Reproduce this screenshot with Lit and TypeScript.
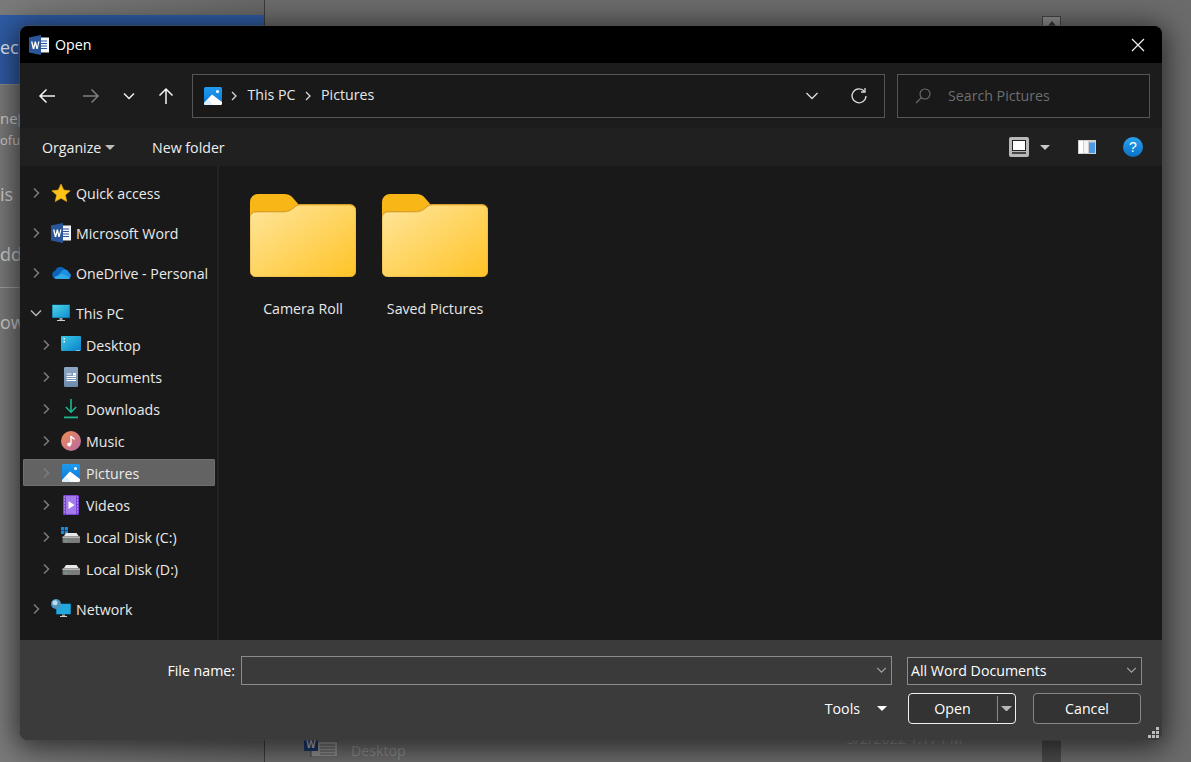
import { LitElement, html, css, svg } from "lit";
import { customElement } from "lit/decorators.js";

const word = (s: number) => html`<svg width=${s} height=${s} viewBox="0 0 20 20">
  <rect x="8" y="2.5" width="12" height="15" fill="#f4f6fa"/>
  <path d="M11 6h7M11 8.500h7M11 11h7M11 13.500h7" stroke="#2b579a" stroke-width="1"/>
  <path d="M0 2.500 12 0v20L0 17.500z" fill="#2b579a"/>
  <path d="M2 6.500h1.500l1 5 1.200-5h1.300l1.200 5 1-5h1.300L8.700 14H7.300L6.300 9.500 5.300 14H3.800z" fill="#fff"/>
</svg>`;

const picturesIcon = (s: number) => html`<svg width=${s} height=${s} viewBox="0 0 18 18">
  <defs><linearGradient id="picg" x1="0" y1="0" x2="0" y2="1"><stop offset="0" stop-color="#1f9bef"/><stop offset="1" stop-color="#0b76d6"/></linearGradient></defs>
  <rect width="18" height="18" rx="1.500" fill="url(#picg)"/>
  <circle cx="13.500" cy="4.500" r="1.500" fill="#fff"/>
  <path d="M0 16 8 7.500 18 15v1.500a1.500 1.500 0 0 1-1.500 1.500h-15A1.500 1.500 0 0 1 0 16.500z" fill="#fff"/>
  <path d="M0 17 4.500 12.800 9 18H1.500z" fill="#d9efff"/>
</svg>`;

const disk = (win: boolean) => html`<svg width="20" height="20" viewBox="0 0 20 20">
  ${win ? svg`<path d="M0 0h3.200v3.200H0zM3.800 0H7v3.200H3.800zM0 3.800h3.200V7H0zM3.800 3.800H7V7H3.800z" fill="#1b86d8"/>` : ""}
  <path d="M3 9 5 6h10.500l2.500 3.500H2z" fill="#e8e8e8"/>
  <rect x="1.500" y="9.500" width="17.500" height="6.500" rx="1" fill="#7c7c7c"/>
  <rect x="1.500" y="9.500" width="17.500" height="1.500" fill="#b5b5b5"/>
  <rect x="4" y="13" width="1.500" height="1.500" fill="#3fd45c"/>
</svg>`;

const icons: Record<string, unknown> = {
  star: html`<svg width="20" height="20" viewBox="0 0 20 20"><path d="M10 1l2.800 6 6.400.700-4.800 4.400 1.400 6.500L10 15.300l-5.800 3.300 1.400-6.500L.8 7.700 7.200 7z" fill="#fcc419" stroke="#e9a90c" stroke-width=".6"/></svg>`,
  word: word(20),
  cloud: html`<svg width="20" height="20" viewBox="0 0 20 20"><path d="M5 15.500A3.900 3.900 0 0 1 4.300 7.800 5.500 5.500 0 0 1 14.500 7a3.800 3.800 0 0 1 .4 1l-5 4z" fill="#0c64b8"/><path d="M4.500 16h12a3.300 3.300 0 0 0 1.600-6.200 4.400 4.400 0 0 0-7.900-1.300z" fill="#1d8fe0"/><path d="M4.800 16h12.400a3 3 0 0 0 2-1L11 10.500 3 14.300A3 3 0 0 0 4.800 16z" fill="#31a8ea"/></svg>`,
  pc: html`<svg width="20" height="20" viewBox="0 0 20 20"><defs><linearGradient id="pcg" x1="0" y1="0" x2="1" y2="1"><stop offset="0" stop-color="#4fd3e6"/><stop offset="1" stop-color="#0d8fd0"/></linearGradient></defs><rect x="1" y="1.500" width="18" height="13.500" fill="#0a5f86"/><rect x="1.500" y="2" width="17" height="12.500" fill="url(#pcg)"/><rect x="8.500" y="15" width="3" height="2" fill="#9aa3a8"/><rect x="6" y="17" width="8" height="1" fill="#c9cfd2"/></svg>`,
  desktop: html`<svg width="20" height="20" viewBox="0 0 20 20"><defs><linearGradient id="dkg" x1="0" y1="0" x2="1" y2="1"><stop offset="0" stop-color="#38cbe6"/><stop offset="1" stop-color="#0b7fc9"/></linearGradient></defs><rect y="1" width="20" height="15" rx="1" fill="url(#dkg)"/><rect x="2.500" y="3" width="1.500" height="1.500" fill="#fff"/><rect x="2.500" y="6" width="1.500" height="1.500" fill="#fff"/><rect x="15.500" y="15" width="1" height="1" fill="#fff"/><rect x="17.500" y="15" width="1" height="1" fill="#fff"/></svg>`,
  docs: html`<svg width="20" height="20" viewBox="0 0 20 20"><defs><linearGradient id="dcg" x1="0" y1="0" x2="0" y2="1"><stop offset="0" stop-color="#8da7c4"/><stop offset="1" stop-color="#6d8bac"/></linearGradient></defs><rect x="3" width="14" height="20" rx="1.200" fill="url(#dcg)"/><rect x="12" y="6" width="3" height="2.500" fill="#fff"/><path d="M5.500 7h5M5.500 9.500h9.500M5.500 11.500h9.500M5.500 13.500h9.500" stroke="#fff" stroke-width="1"/></svg>`,
  down: html`<svg width="20" height="20" viewBox="0 0 20 20"><path d="M10 0v13M4.800 8 10 13.200 15.200 8" fill="none" stroke="#1fb58f" stroke-width="1.600"/><rect x="3" y="17.500" width="14" height="1.800" fill="#1fb58f"/></svg>`,
  music: html`<svg width="20" height="20" viewBox="0 0 20 20"><defs><linearGradient id="mug" x1="0" y1="0" x2="1" y2="1"><stop offset="0" stop-color="#ee8f4f"/><stop offset="1" stop-color="#b866a8"/></linearGradient></defs><circle cx="10" cy="10" r="10" fill="url(#mug)"/><path d="M10 5v8" stroke="#fff" stroke-width="1.400"/><path d="M10 5c.5 2 3 2 3.500 3.500" fill="none" stroke="#fff" stroke-width="1.400"/><circle cx="8.200" cy="13.500" r="2" fill="#fff"/></svg>`,
  pictures: picturesIcon(18),
  videos: html`<svg width="20" height="20" viewBox="0 0 20 20"><rect x="2" width="16" height="20" rx="1.500" fill="#7b46d8"/><rect x="5" y="1" width="10" height="18" fill="#a47bea"/><path d="M3 2h1M3 5h1M3 8h1M3 11h1M3 14h1M3 17h1M16 2h1M16 5h1M16 8h1M16 11h1M16 14h1M16 17h1" stroke="#d9c8f7" stroke-width="1.200"/><path d="M7.500 6v8l6-4z" fill="#fff"/></svg>`,
  diskC: disk(true),
  diskD: disk(false),
  net: html`<svg width="20" height="20" viewBox="0 0 20 20"><rect x="5" y="4.500" width="15" height="11" fill="#0a5f86"/><rect x="5.500" y="5" width="14" height="10" fill="#22a8dc"/><rect x="11" y="15.500" width="3" height="1.500" fill="#9aa3a8"/><rect x="9" y="17" width="7" height="1" fill="#c9cfd2"/><circle cx="5" cy="5" r="5" fill="#4d94bd"/><circle cx="4" cy="3.800" r="2.500" fill="#bcdcee"/></svg>`,
};

interface Row { label: string; icon: string; child?: boolean; open?: boolean; selected?: boolean; gap?: boolean }
const rows: Row[] = [
  { label: "Quick access", icon: "star", gap: true },
  { label: "Microsoft Word", icon: "word", gap: true },
  { label: "OneDrive - Personal", icon: "cloud", gap: true },
  { label: "This PC", icon: "pc", open: true },
  { label: "Desktop", icon: "desktop", child: true },
  { label: "Documents", icon: "docs", child: true },
  { label: "Downloads", icon: "down", child: true },
  { label: "Music", icon: "music", child: true },
  { label: "Pictures", icon: "pictures", child: true, selected: true },
  { label: "Videos", icon: "videos", child: true },
  { label: "Local Disk (C:)", icon: "diskC", child: true },
  { label: "Local Disk (D:)", icon: "diskD", child: true, gap: true },
  { label: "Network", icon: "net" },
];

const chevR = html`<svg width="10" height="12" viewBox="0 0 10 12"><path d="M3 1.500 7.500 6 3 10.500" fill="none" stroke="#7d7d7d" stroke-width="1.500"/></svg>`;
const chevD = html`<svg width="12" height="10" viewBox="0 0 12 10"><path d="M1 2.500 6 7.500l5-5" fill="none" stroke="#b5b5b5" stroke-width="1.500"/></svg>`;
const crumb = html`<svg class="crumb" width="8" height="10" viewBox="0 0 8 10"><path d="M2 1l4 4-4 4" fill="none" stroke="#d8d8d8" stroke-width="1.300"/></svg>`;
const dropChev = (c: string, w = 14) => html`<svg width=${w} height=${w * 8 / 14} viewBox="0 0 14 8"><path d="M1.500 1 7 6.500 12.500 1" fill="none" stroke=${c} stroke-width="1.400"/></svg>`;
const caret = (c: string, w = 10) => html`<svg width=${w} height=${w / 2} viewBox="0 0 10 5"><path d="M0 0h10L5 5z" fill=${c}/></svg>`;

const folder = (id: string) => html`<svg class="folder" width="106" height="83" viewBox="0 0 106 83">
  <defs>
    <linearGradient id="fb${id}" x1="0" y1="0" x2="1" y2="1"><stop offset="0" stop-color="#ffe69c"/><stop offset="1" stop-color="#ffc326"/></linearGradient>
  </defs>
  <path d="M0 8a8 8 0 0 1 8-8h26q6 0 9 4l6 7H100a6 6 0 0 1 6 6v20H0z" fill="#f9b617"/>
  <path d="M0 23a6 6 0 0 1 6-6h28q4 0 7-2l4-3q2-2 5-2h50a6 6 0 0 1 6 6v4H0z" fill="#d99f1c"/>
  <path d="M0 24a6 6 0 0 1 6-6h28q4 0 7-2l4-3q2-2 5-2h50a6 6 0 0 1 6 6v60a6 6 0 0 1-6 6H6a6 6 0 0 1-6-6z" fill="url(#fb${id})" stroke="#d9a53a" stroke-width=".7"/>
</svg>`;

@customElement("app-root")
export class AppRoot extends LitElement {
  static styles = css`
    :host { display: block; position: relative; width: 1191px; height: 762px; overflow: hidden; background: #6b6b6b; font-family: "Open Sans", "Noto Sans", sans-serif; font-size: 14.2px; color: #fff; }
    .back { display: flex; height: 762px; }
    .side { width: 264px; flex: none; border-right: 1px solid #3a3a3a; display: flex; flex-direction: column; padding-top: 15px; background: linear-gradient(90deg, #7a7a7a, #666); color: #d0d0d0; }
    .hero { height: 70px; background: #2f5ba3; flex: none; color: #e4eaf5; font-size: 18px; padding-top: 21px; box-sizing: border-box; line-height: 22px; margin-bottom: 22px; border-bottom: 1px solid #8a8a8a; }
    .ln { height: 22px; line-height: 22px; font-size: 15px; white-space: nowrap; flex: none; }
    .ln.sm { font-size: 13px; }
    .ln.big { font-size: 18px; }
    .ln.is { margin-top: 32px; }
    .ln.dd { margin-top: 38px; }
    .rule { height: 1px; background: #a0a0a0; margin-top: 22px; flex: none; }
    .ln.ow { margin-top: 23px; }
    .mid { flex: 1; display: flex; flex-direction: column; justify-content: flex-end; padding: 0 0 0 39px; color: #8a8a8a; }
    .entry { display: flex; gap: 13px; height: 26px; align-items: flex-start; }
    .entry .d { margin-top: 5px; line-height: 20px; }
    .entry .when { margin: -7px 0 0 428px; line-height: 20px; white-space: nowrap; }
    .sb { width: 19px; margin-right: 130px; display: flex; flex-direction: column; justify-content: space-between; padding-top: 16px; box-sizing: border-box; flex: none; }
    .sb .b { height: 20px; background: #8d8d8d; border: 1px solid #444; box-sizing: border-box; display: flex; justify-content: center; padding-top: 4px; }
    .sb .c { height: 22px; background: #4a4a4a; }

    .dlg { position: absolute; left: 20px; top: 26px; width: 1142px; height: 714px; border-radius: 8px; overflow: hidden; display: flex; flex-direction: column; background: #191919; }
    .shadow { position: absolute; left: 20px; top: 26px; width: 1142px; height: 714px; border-radius: 8px; box-shadow: 0 4px 28px 4px rgba(0,0,0,.62), 0 0 0 1px rgba(120,120,120,.45); }
    .title { height: 37px; flex: none; background: #000; display: flex; align-items: center; padding: 0 17px 0 9px; gap: 6px; line-height: 37px; }
    .title .t { flex: 1; color: #fff; }
    .nav { height: 65px; flex: none; background: #1c1c1c; display: flex; align-items: center; padding: 0 12px 0 16px; box-sizing: border-box; }
    .nbtn { display: flex; align-items: center; justify-content: center; flex: none; height: 24px; }
    .nbtn.back-b { width: 22px; }
    .nbtn.fwd { width: 22px; margin-left: 22px; }
    .nbtn.rec { width: 32px; margin-left: 11px; }
    .nbtn.up { width: 42px; margin-right: 5px; }
    .addr { flex: none; width: 693px; height: 44px; box-sizing: border-box; border: 1px solid #555; background: #191919; display: flex; align-items: center; padding: 0 16px 0 11px; margin: 0 12px 0 0; }
    .addr .pic { display: flex; margin-right: 8px; }
    .addr .t { margin: 0 8px 2px 9.5px; color: #e8e8e8; }
    .addr .crumb { flex: none; }
    .addr .sp { flex: 1; }
    .refresh { margin-left: 31px; flex: none; }
    .search { flex: none; width: 253px; height: 44px; box-sizing: border-box; border: 1px solid #555; background: #191919; display: flex; align-items: center; padding-left: 17px; color: #6e6e6e; gap: 17px; }
    .cmd { height: 38px; flex: none; background: #202020; display: flex; align-items: center; padding: 0 19px 0 22px; color: #eee; }
    .cmd .org { display: flex; align-items: center; gap: 4px; width: 110px; }
    .cmd .sp { flex: 1; }
    .viewbtn { width: 20px; height: 20px; background: #b9b9b9; border-radius: 2px; display: flex; align-items: center; justify-content: center; }
    .viewcar { margin: 0 28px 0 11px; display: flex; }
    .panes { margin-right: 27px; display: flex; }
    .help { display: flex; }
    .body { flex: 1; display: flex; min-height: 0; }
    .tree { width: 197px; flex: none; padding-top: 11px; }
    .sep { width: 2px; background: #232323; flex: none; }
    .row { height: 32px; display: flex; align-items: center; box-sizing: border-box; padding: 2px 2px 3px 3px; color: #eaeaea; }
    .row.gap { margin-bottom: 8px; }
    .in { flex: 1; height: 27px; display: flex; align-items: center; box-sizing: border-box; padding-left: 6px; border: 1px solid transparent; white-space: nowrap; }
    .in.sel { background: #636363; border-color: #6f6f6f; border-radius: 1px; }
    .in.kid { padding-left: 16px; }
    .tw { width: 12px; display: flex; justify-content: center; flex: none; margin-right: 9px; }
    .ico { width: 20px; height: 20px; display: flex; align-items: center; justify-content: center; margin-right: 5px; flex: none; }
    .lbl { padding-top: 2px; }
    .files { flex: 1; display: flex; align-items: flex-start; padding: 28px 0 0 18px; }
    .tile { width: 132px; display: flex; flex-direction: column; align-items: center; color: #e8e8e8; }
    .tile .n { margin-top: 22px; line-height: 20px; }
    .foot { height: 100px; flex: none; background: #3b3b3b; display: flex; flex-direction: column; padding: 16px 20px 0 0; box-sizing: border-box; position: relative; }
    .fr { display: flex; align-items: center; justify-content: flex-end; }
    .fr.a { height: 29px; margin-bottom: 8px; }
    .lab { margin-right: 6px; }
    .inp { width: 651px; height: 29px; box-sizing: border-box; border: 1px solid #8c8c8c; background: #3a3a3a; display: flex; align-items: center; justify-content: flex-end; padding-right: 4px; margin-right: 15px; }
    .sel2 { width: 235px; height: 28px; box-sizing: border-box; border: 1px solid #8c8c8c; display: flex; align-items: center; justify-content: space-between; padding: 0 4px 0 3px; background: #353535; }
    .tools { display: flex; align-items: center; margin-right: 21px; gap: 17px; }
    .open { width: 108px; height: 31px; box-sizing: border-box; border: 1px solid #f0f0f0; border-radius: 4px; display: flex; align-items: center; background: #333; margin-right: 17px; }
    .open .l { flex: 1; text-align: center; padding-right: 1px; }
    .open .split { width: 1px; height: 25px; background: #8c8c8c; margin-right: 3px; }
    .open .car { margin-right: 3px; display: flex; }
    .cancel { width: 108px; height: 31px; box-sizing: border-box; border: 1px solid #868686; border-radius: 4px; display: flex; align-items: center; justify-content: center; background: #333; margin-right: 1px; }
    .grip { position: absolute; right: 3px; bottom: 2px; }
  `;

  render() {
    return html`
      <div class="back">
        <div class="side">
          <div class="hero">ece</div>
          <div class="ln">ne[</div>
          <div class="ln sm">ofu.</div>
          <div class="ln big is">is</div>
          <div class="ln big dd">dd</div>
          <div class="rule"></div>
          <div class="ln big ow">ow</div>
        </div>
        <div class="mid">
          <div class="entry">
            <svg width="34" height="21" viewBox="0 0 34 21"><rect x="7" y="5" width="27" height="16" fill="#8f8f8f" stroke="#444"/><path d="M16 9h15M16 12h15M16 15h15M16 18h15" stroke="#555"/><rect width="14" height="15" fill="#1c3564"/><text x="7" y="12" font-size="10" font-weight="700" text-anchor="middle" fill="#aab4c8" font-family="Liberation Sans, sans-serif">W</text></svg>
            <span class="d">Desktop</span><span class="when">3/2/2022 1:17 PM</span>
          </div>
        </div>
        <div class="sb">
          <div class="b"><svg width="8" height="5" viewBox="0 0 8 5"><path d="M0 5 4 0l4 5z" fill="#333"/></svg></div>
          <div class="c"></div>
        </div>
      </div>
      <div class="shadow"></div>
      <div class="dlg">
        <div class="title">
          ${word(20)}
          <span class="t">Open</span>
          <svg width="14" height="14" viewBox="0 0 14 14"><path d="M1 1l12 12M13 1 1 13" stroke="#f0f0f0" stroke-width="1.200"/></svg>
        </div>
        <div class="nav">
          <span class="nbtn back-b"><svg width="18" height="16" viewBox="0 0 18 16"><path d="M17 8H2M8.500 1.500 2 8l6.500 6.500" fill="none" stroke="#f4f4f4" stroke-width="1.500"/></svg></span>
          <span class="nbtn fwd"><svg width="18" height="16" viewBox="0 0 18 16"><path d="M1 8h15M9.500 1.500 16 8l-6.500 6.500" fill="none" stroke="#7d7d7d" stroke-width="1.500"/></svg></span>
          <span class="nbtn rec"><svg width="12" height="8" viewBox="0 0 12 8"><path d="M1 1.500 6 6.500l5-5" fill="none" stroke="#f0f0f0" stroke-width="1.500"/></svg></span>
          <span class="nbtn up"><svg width="16" height="18" viewBox="0 0 16 18"><path d="M8 17V2M1.500 8.500 8 2l6.500 6.500" fill="none" stroke="#f4f4f4" stroke-width="1.500"/></svg></span>
          <div class="addr">
            <span class="pic">${picturesIcon(18)}</span>
            ${crumb}<span class="t">This PC</span>${crumb}<span class="t">Pictures</span>
            <span class="sp"></span>
            ${dropChev("#d8d8d8")}
            <svg class="refresh" width="18" height="18" viewBox="0 0 18 18"><path d="M14.500 4.500A7 7 0 1 0 16 9" fill="none" stroke="#dcdcdc" stroke-width="1.300"/><path d="M15 1v4h-4" fill="none" stroke="#dcdcdc" stroke-width="1.300"/></svg>
          </div>
          <div class="search">
            <svg width="16" height="16" viewBox="0 0 16 16"><circle cx="10" cy="6" r="5" fill="none" stroke="#6e6e6e" stroke-width="1.100"/><path d="M6.500 9.500 1 15" stroke="#6e6e6e" stroke-width="1.100"/></svg>
            <span>Search Pictures</span>
          </div>
        </div>
        <div class="cmd">
          <div class="org"><span>Organize</span>${caret("#bdbdbd")}</div>
          <span>New folder</span>
          <span class="sp"></span>
          <div class="viewbtn"><svg width="16" height="15" viewBox="0 0 16 15"><rect x="1.500" y=".5" width="13" height="10" fill="#fff" stroke="#222"/><path d="M1 13h14" stroke="#222" stroke-width="1.400"/></svg></div>
          <div class="viewcar">${caret("#c8c8c8")}</div>
          <div class="panes"><svg width="18" height="14" viewBox="0 0 18 14"><rect width="18" height="14" fill="#cfcfcf"/><rect x="1" y="1" width="4" height="12" fill="#fff"/><rect x="6" y="1" width="4" height="12" fill="#f4f4f4"/><rect x="11" y="2.500" width="6" height="10.500" fill="#4a9ae8"/></svg></div>
          <div class="help"><svg width="20" height="20" viewBox="0 0 20 20"><defs><linearGradient id="hg" x1="0" y1="0" x2="0" y2="1"><stop offset="0" stop-color="#2aa3ee"/><stop offset="1" stop-color="#0a70c8"/></linearGradient></defs><circle cx="10" cy="10" r="10" fill="url(#hg)"/><text x="10" y="15" font-size="14" text-anchor="middle" fill="#fff" font-family="Liberation Sans, sans-serif">?</text></svg></div>
        </div>
        <div class="body">
          <div class="tree">
            ${rows.map(r => html`
              <div class="row ${r.gap ? "gap" : ""}">
                <div class="in ${r.child ? "kid" : ""} ${r.selected ? "sel" : ""}">
                  <span class="tw">${r.open ? chevD : chevR}</span>
                  <span class="ico">${icons[r.icon]}</span>
                  <span class="lbl">${r.label}</span>
                </div>
              </div>`)}
          </div>
          <div class="sep"></div>
          <div class="files">
            <div class="tile">${folder("a")}<span class="n">Camera Roll</span></div>
            <div class="tile">${folder("b")}<span class="n">Saved Pictures</span></div>
          </div>
        </div>
        <div class="foot">
          <div class="fr a">
            <span class="lab">File name:</span>
            <div class="inp">${dropChev("#a8a8a8", 11)}</div>
            <div class="sel2"><span>All Word Documents</span>${dropChev("#a8a8a8", 11)}</div>
          </div>
          <div class="fr">
            <div class="tools"><span>Tools</span>${caret("#fff")}</div>
            <div class="open"><span class="l">Open</span><span class="split"></span><span class="car">${caret("#b8b8b8", 11)}</span></div>
            <div class="cancel">Cancel</div>
          </div>
          <svg class="grip" width="11" height="11" viewBox="0 0 11 11"><path d="M8 0h3v3H8zM4 4h3v3H4zM8 4h3v3H8zM0 8h3v3H0zM4 8h3v3H4zM8 8h3v3H8z" fill="#bdbdbd"/></svg>
        </div>
      </div>
    `;
  }
}
